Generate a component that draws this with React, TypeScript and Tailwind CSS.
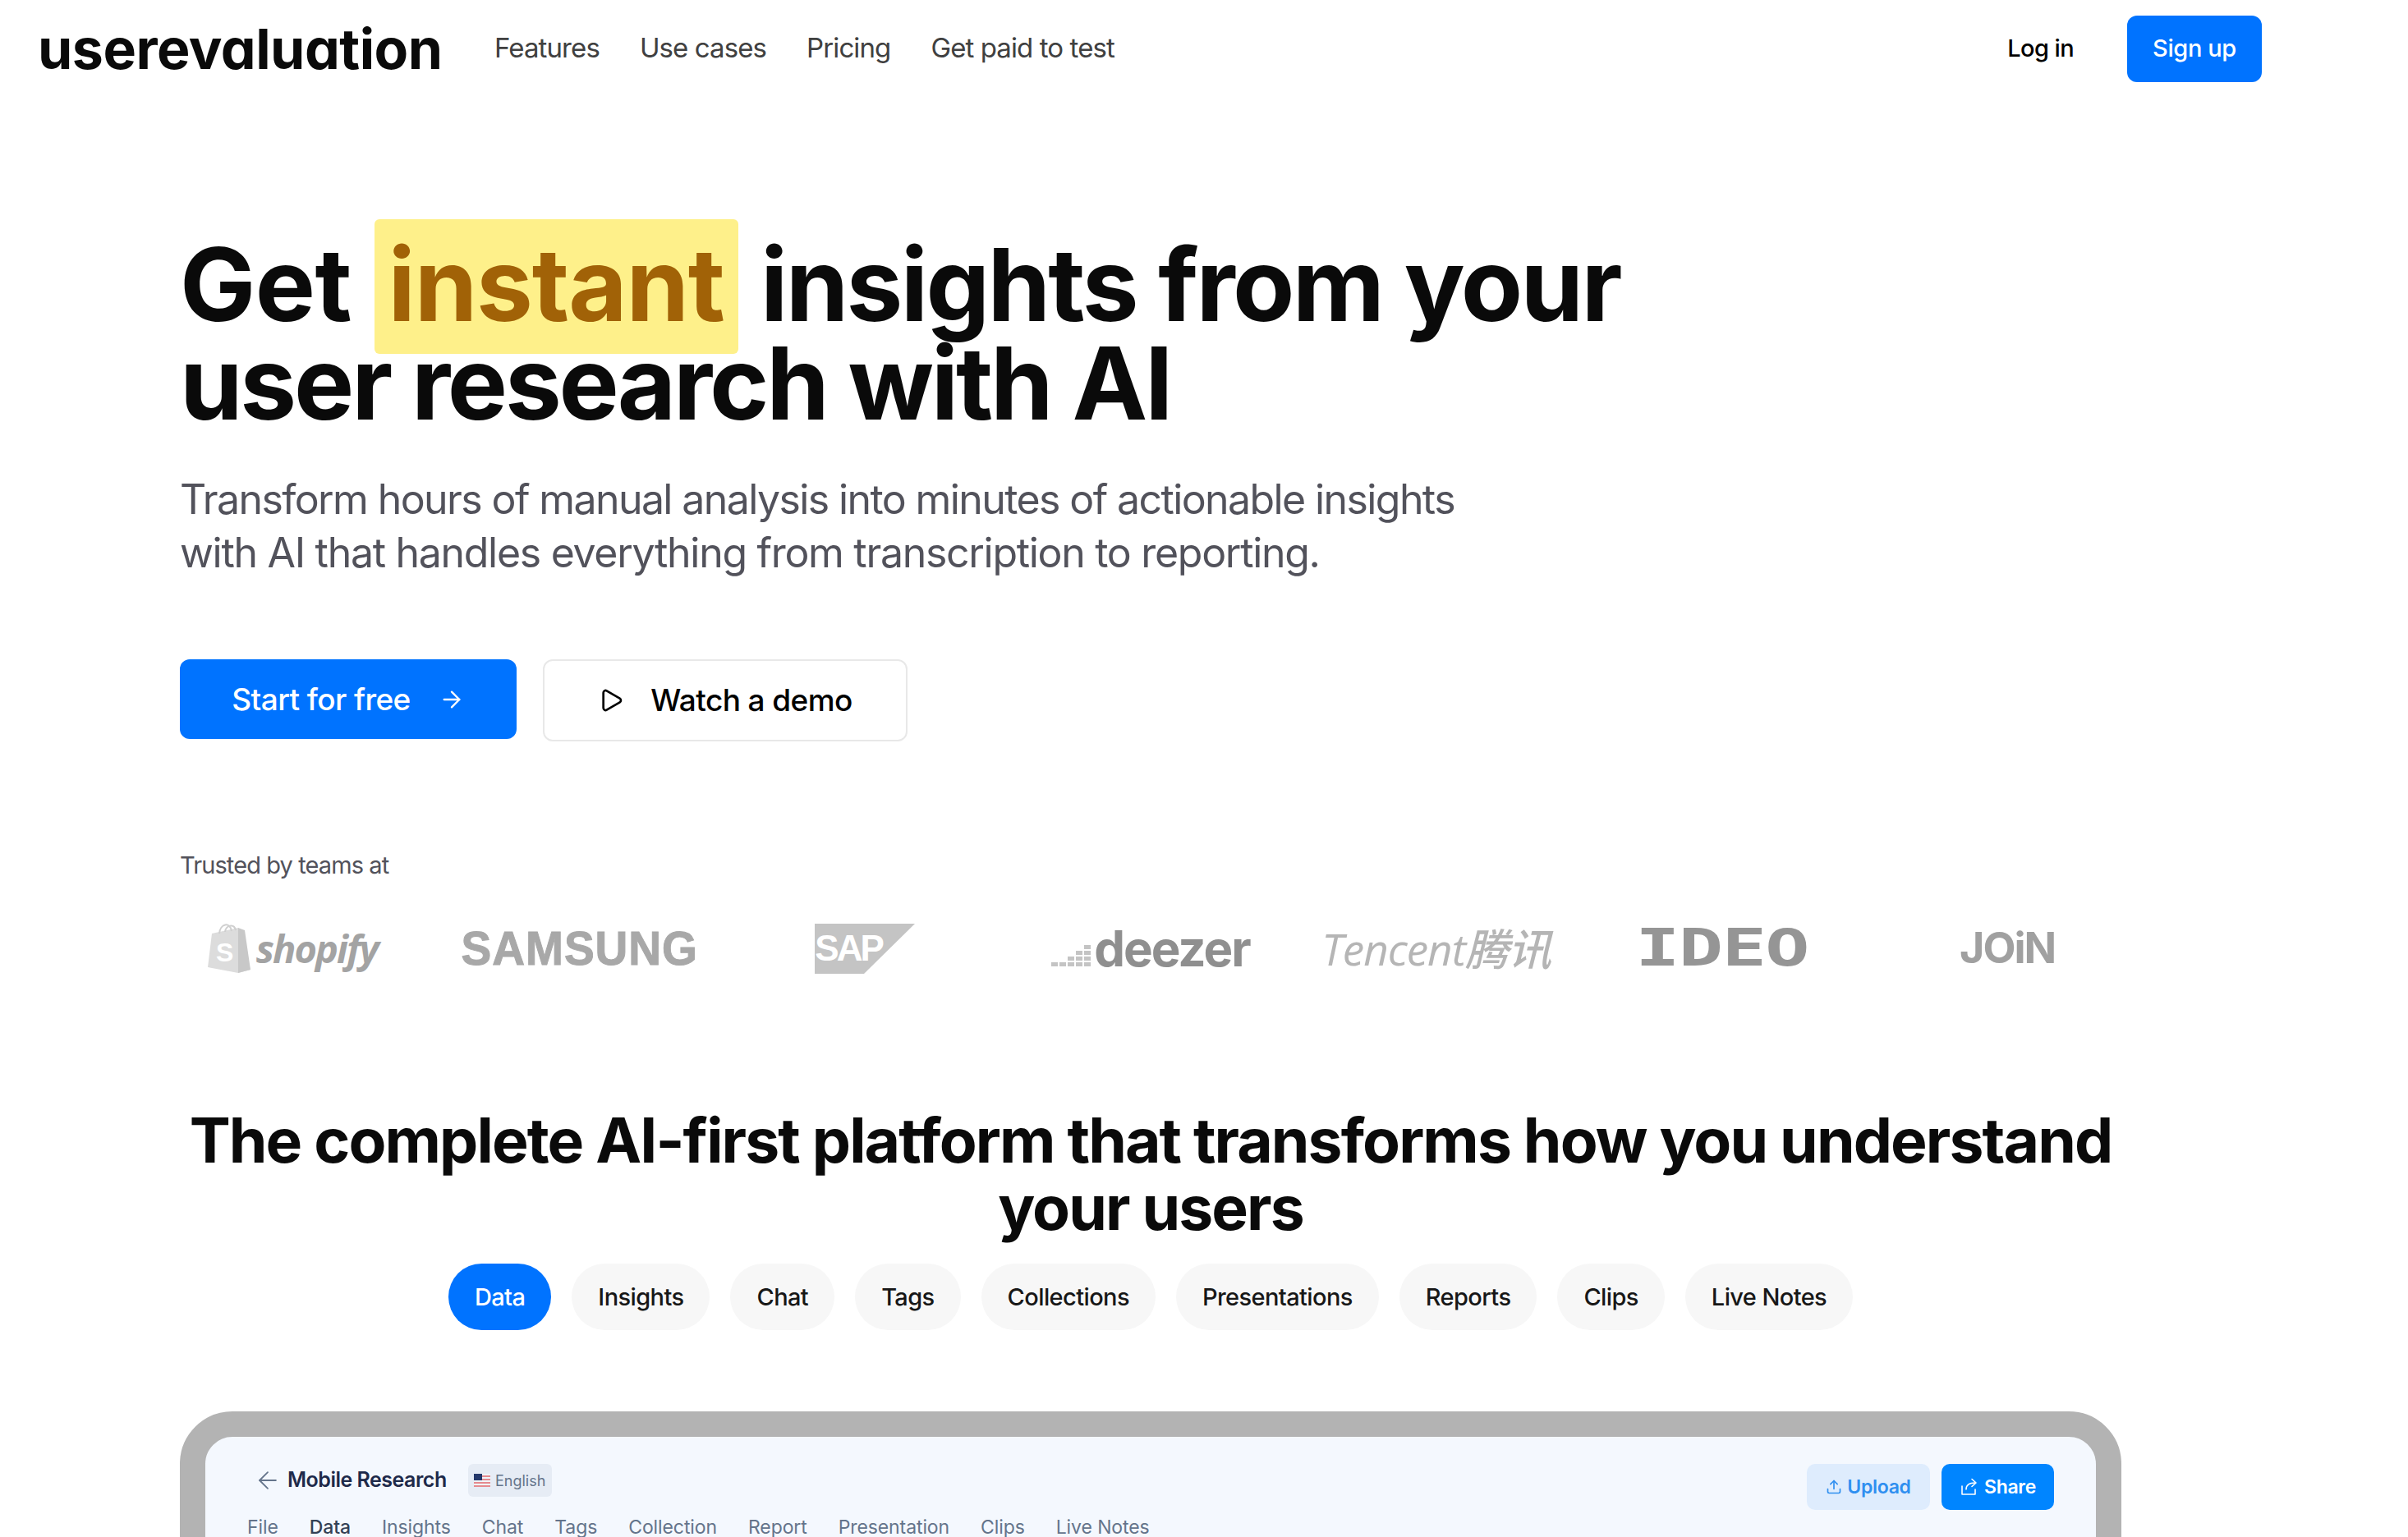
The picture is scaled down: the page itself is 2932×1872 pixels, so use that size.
import { ArrowLeft, ArrowRight, Play, Upload } from 'lucide-react'

const navLinks = ['Features', 'Use cases', 'Pricing', 'Get paid to test']
const tabs = ['Data', 'Insights', 'Chat', 'Tags', 'Collections', 'Presentations', 'Reports', 'Clips', 'Live Notes']
const appTabs = ['File', 'Data', 'Insights', 'Chat', 'Tags', 'Collection', 'Report', 'Presentation', 'Clips', 'Live Notes']

function ShopifyLogo() {
  return (
    <div className="-ml-[4px] flex items-center gap-[6px]">
      <svg width="54" height="62" viewBox="0 0 54 62">
        <path d="M6 13 L38 6 L53 57 L38 61 L1 54 Z" fill="#dcdcdc" />
        <path d="M38 6 L46 9 L53 57 L38 61 Z" fill="#c8c8c8" />
        <path d="M15 13 C16 1 28 -2 30 10" fill="none" stroke="#cfcfcf" strokeWidth="2" />
        <path d="M22 11 C23 3 33 0 35 9" fill="none" stroke="#cfcfcf" strokeWidth="2" />
        <text x="11" y="47" fontSize="32" fontWeight="700" fill="#ffffff" fontFamily="Liberation Sans, sans-serif">S</text>
      </svg>
      <span className="font-['Open_Sans',sans-serif] text-[47px] font-bold italic leading-none tracking-[-2px] text-[#a3a3a3]">shopify</span>
    </div>
  )
}

function SapLogo() {
  return (
    <div className="relative h-[61px] w-[122px]">
      <svg width="122" height="61" viewBox="0 0 122 61" className="absolute inset-0">
        <path d="M0 0 H122 L60 61 H0 Z" fill="#c4c4c4" />
      </svg>
      <span className="absolute left-0 top-[8px] font-['Liberation_Sans',sans-serif] text-[44px] font-bold leading-none tracking-[-3px] text-white">SAP</span>
    </div>
  )
}

function DeezerLogo() {
  const bars = [1, 1, 2, 3, 4]
  return (
    <div className="flex items-end gap-[4px] blur-[0.6px]">
      <div className="mb-[8px] flex items-end gap-[2px]">
        {bars.map((n, i) => (
          <div key={i} className="flex flex-col gap-[2px]">
            {Array.from({ length: n }).map((_, j) => (
              <div key={j} className="h-[5px] w-[8px] bg-[#c4c4c4]" />
            ))}
          </div>
        ))}
      </div>
      <span className="font-['Inter',sans-serif] text-[60px] font-bold leading-none tracking-[-2px] text-[#8f8f8f]">deezer</span>
    </div>
  )
}

function UsFlag() {
  return (
    <svg width="20" height="16" viewBox="0 0 20 16">
      <rect width="20" height="16" fill="#f1f5f9" />
      <rect y="6" width="20" height="2" fill="#e58a8f" />
      <rect y="10" width="20" height="2" fill="#e58a8f" />
      <rect y="14" width="20" height="2" fill="#e58a8f" />
      <rect y="2" x="10" width="10" height="2" fill="#e58a8f" />
      <rect width="10" height="8" fill="#24386b" />
    </svg>
  )
}

function ShareTray() {
  return (
    <svg width="24" height="24" viewBox="0 0 24 24" fill="none" stroke="currentColor" strokeWidth="1.6" strokeLinecap="round" strokeLinejoin="round">
      <path d="M3 11 V21 H19 V15" />
      <path d="M8 15 C8 10 12 7 19 7" />
      <path d="M15 2.5 L20 7 L15 11.5" />
    </svg>
  )
}

export default function App() {
  return (
    <div className="h-[1872px] w-[2932px] overflow-hidden bg-white font-['Inter',sans-serif] text-black">
      <div className="w-[2804px]">
        <header className="flex h-[118px] items-center pl-[46px] pr-[50px]">
          <span className="w-[556px] text-[68px] font-bold leading-none tracking-[-0.5px] text-[#0a0a0a] [font-feature-settings:'cv11']">userevaluation</span>
          <nav className="flex items-center gap-[49px]">
            {navLinks.map((l) => (
              <a key={l} className="text-[33px] tracking-[-0.9px] text-[#404040]">{l}</a>
            ))}
          </nav>
          <div className="ml-auto flex items-center gap-[65px]">
            <a className="text-[29px] font-medium tracking-[-0.6px] text-black">Log in</a>
            <button className="h-[81px] w-[164px] rounded-[12px] bg-[#0073ff] text-[29px] font-medium tracking-[-0.4px] text-white">Sign up</button>
          </div>
        </header>

        <main className="pl-[219px] pr-[221px] pt-[169px]">
          <h1 className="whitespace-nowrap text-[123px] font-bold leading-[120px] tracking-[-2.7px] text-[#0a0a0a]">
            <span className="tracking-[-0.5px]">Get</span>{' '}
            <span className="-mb-[24px] -mt-[20px] mx-[1px] inline-block rounded-[6px] bg-[#fef08a] px-[17px] pb-[24px] pt-[20px] leading-[120px] tracking-[-1.2px] text-[#a16207]">instant</span> insights from your
            <br />
            <span className="tracking-[-3.2px]">user research with AI</span>
          </h1>
          <p className="mt-[49px] text-[50px] leading-[65px] tracking-[-1.6px] text-[#52525b]">
            Transform hours of manual analysis into minutes of actionable insights
            <br />
            <span className="tracking-[-1.3px]">with AI that handles everything from transcription to reporting.</span>
          </p>

          <div className="mt-[97px] flex items-start gap-[32px]">
            <button className="flex h-[97px] w-[410px] items-center justify-center gap-[34px] rounded-[12px] bg-[#0073ff] text-[37px] font-medium tracking-[-0.6px] text-white">
              Start for free
              <ArrowRight size={32} strokeWidth={1.75} />
            </button>
            <button className="flex h-[100px] w-[444px] items-center justify-center gap-[32px] rounded-[12px] border-2 border-[#e8e8e8] bg-white text-[37px] font-medium tracking-[-0.6px] text-black">
              <Play size={32} strokeWidth={2} />
              Watch a demo
            </button>
          </div>

          <p className="mt-[132px] text-[29px] leading-[38px] tracking-[-0.9px] text-[#52525b]">Trusted by teams at</p>

          <div className="-mx-[35px] mt-[49px] grid h-[66px] grid-cols-7 items-center">
            <div className="flex justify-center"><ShopifyLogo /></div>
            <div className="flex justify-center">
              <span className="scale-x-[0.95] font-['Liberation_Sans',sans-serif] text-[58px] font-bold leading-none tracking-[1px] text-[#a8a8a8] [-webkit-text-stroke:1px_#a8a8a8]">SAMSUNG</span>
            </div>
            <div className="flex justify-center"><SapLogo /></div>
            <div className="flex justify-center"><DeezerLogo /></div>
            <div className="flex justify-center">
              <span className="font-['Open_Sans','Noto_Sans_CJK_SC',sans-serif] text-[53px] font-medium italic leading-none tracking-[-1px] text-[#b5b5b5]">Tencent腾讯</span>
            </div>
            <div className="flex justify-center">
              <span className="scale-x-[1.45] font-['DejaVu_Sans_Mono',monospace] text-[62px] font-bold leading-none tracking-[-1px] text-[#959595]">IDEO</span>
            </div>
            <div className="flex justify-center">
              <span className="font-['Inter',sans-serif] text-[52px] font-bold leading-none tracking-[-2px] text-[#a0a0a0]">JOiN</span>
            </div>
          </div>

          <h2 className="mt-[160px] whitespace-nowrap text-center text-[75px] font-bold leading-[82px] tracking-[-1.9px] text-[#0a0a0a]">
            The complete AI-first platform that transforms how you understand
            <br />
            your users
          </h2>

          <div className="mt-[27px] flex justify-center gap-[25px]">
            {tabs.map((t, i) => (
              <button
                key={t}
                className={
                  i === 0
                    ? 'h-[81px] rounded-full bg-[#0073ff] px-[32px] text-[29px] font-medium tracking-[-0.6px] text-white'
                    : 'h-[81px] rounded-full bg-[#f7f7f7] px-[32px] text-[29px] font-medium tracking-[-0.6px] text-[#171717]'
                }
              >
                {t}
              </button>
            ))}
          </div>

          <div className="mt-[99px] h-[700px] rounded-[64px] border-[31px] border-[#b3b3b3] bg-[#f4f8fe]">
            <div className="flex items-start justify-between pl-[59px] pr-[51px] pt-[33px]">
              <div className="flex h-[40px] items-center">
                <ArrowLeft size={34} strokeWidth={1.25} className="text-[#64748b]" />
                <span className="ml-[7px] text-[25px] font-semibold tracking-[-0.5px] text-[#1e2a4a]">Mobile Research</span>
                <span className="ml-[26px] flex h-[40px] w-[102px] items-center justify-center gap-[6px] rounded-[6px] bg-[#e6ecf5] text-[18px] text-[#64748b]">
                  <UsFlag />
                  English
                </span>
              </div>
              <div className="flex gap-[14px]">
                <button className="flex h-[56px] w-[150px] items-center justify-center gap-[6px] rounded-[10px] bg-[#deecfd] text-[23px] font-semibold tracking-[-0.3px] text-[#2f8ff0]">
                  <Upload size={20} strokeWidth={2} />
                  Upload
                </button>
                <button className="flex h-[56px] w-[137px] items-center justify-center gap-[6px] rounded-[10px] bg-[#0085ff] text-[23px] font-semibold tracking-[-0.3px] text-white">
                  <ShareTray />
                  Share
                </button>
              </div>
            </div>
            <div className="mt-[4px] flex gap-[38px] pl-[51px] text-[23px] tracking-[-0.1px] text-[#64748b]">
              {appTabs.map((t) => (
                <span key={t} className={t === 'Data' ? 'font-medium text-[#334155]' : ''}>{t}</span>
              ))}
            </div>
          </div>
        </main>
      </div>
    </div>
  )
}
